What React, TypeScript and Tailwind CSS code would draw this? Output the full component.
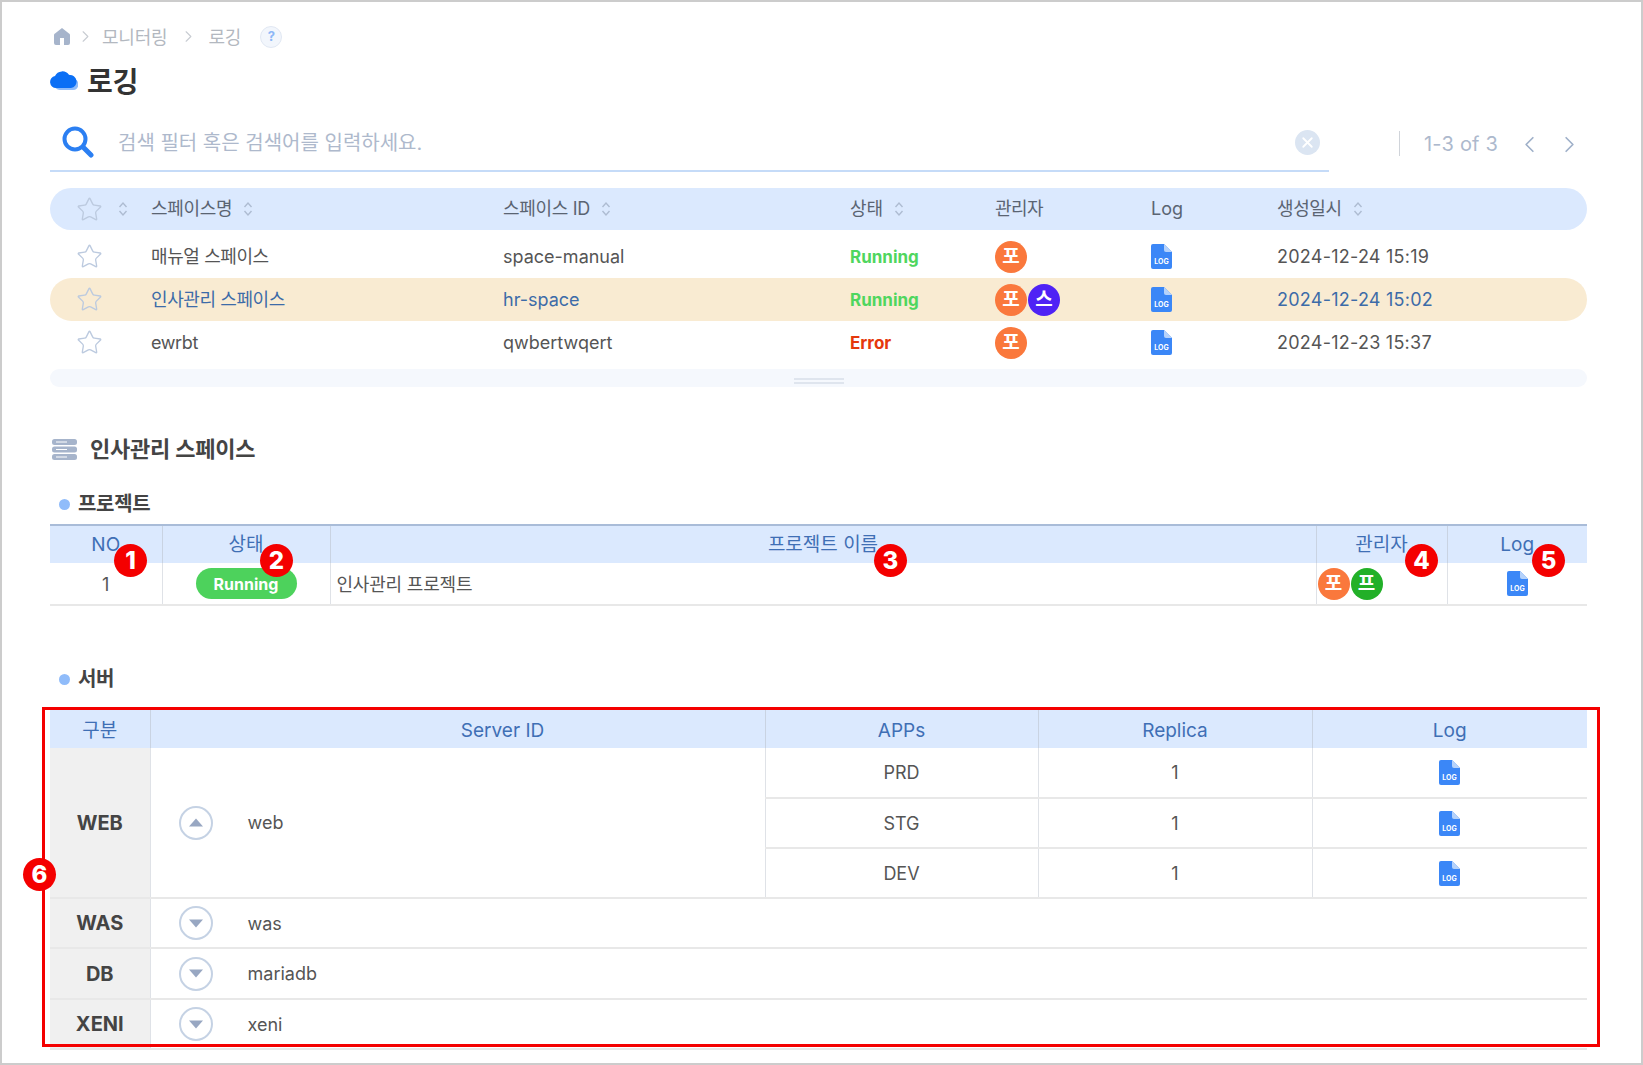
import { ChevronLeft, ChevronRight, Star, X } from 'lucide-react'

const spaces = [
  { name: '매뉴얼 스페이스', id: 'space-manual', status: 'Running', admins: ['포'], date: '2024-12-24 15:19' },
  { name: '인사관리 스페이스', id: 'hr-space', status: 'Running', admins: ['포', '스'], date: '2024-12-24 15:02', active: true },
  { name: 'ewrbt', id: 'qwbertwqert', status: 'Error', admins: ['포'], date: '2024-12-23 15:37' },
]

const servers = [
  { kind: 'WAS', id: 'was', height: 'h-[50px]' },
  { kind: 'DB', id: 'mariadb', height: 'h-[51px]' },
  { kind: 'XENI', id: 'xeni', height: 'h-[50px]' },
]

const avatarColor: Record<string, string> = {
  포: 'bg-[#fa783c]',
  스: 'bg-[#4f22f5]',
  프: 'bg-[#22b028]',
}

function SortIcon() {
  return (
    <svg width="10" height="16" viewBox="0 0 10 16" fill="none" stroke="#aebcd2" strokeWidth="1.4" className="ml-[11px] shrink-0">
      <path d="M1.5 6 5 2l3.5 4M1.5 10 5 14l3.5-4" />
    </svg>
  )
}

function LogIcon() {
  return (
    <svg width="21" height="25" viewBox="0 0 21 25" className="shrink-0">
      <path d="M2 0h11l8 8v15a2 2 0 0 1-2 2H2a2 2 0 0 1-2-2V2a2 2 0 0 1 2-2z" fill="#3b87f7" />
      <path d="M13 0l8 8h-6a2 2 0 0 1-2-2z" fill="#b5d2fb" />
      <text x="10.5" y="19.5" textAnchor="middle" fontSize="7" fontWeight="700" fill="#fff" fontFamily="Inter, sans-serif">LOG</text>
    </svg>
  )
}

function Avatar({ label }: { label: string }) {
  return (
    <span className={`flex h-[32px] w-[32px] items-center justify-center rounded-full pt-[1px] text-[19px] font-bold text-white ${avatarColor[label]}`}>
      {label}
    </span>
  )
}

function Marker({ n, className }: { n: number; className: string }) {
  return (
    <span className={`absolute flex h-[33px] w-[33px] items-center justify-center rounded-full bg-[#f40000] text-[24px] font-extrabold text-white ${className}`}>
      {n}
    </span>
  )
}

function RoundToggle({ up }: { up?: boolean }) {
  return (
    <span className="flex h-[34px] w-[34px] items-center justify-center rounded-full border-2 border-[#c5d2e4]">
      <svg width="16" height="9" viewBox="0 0 16 9" fill="#98a7c2">
        <path d={up ? 'M8 0.5 15 8.5H1z' : 'M1 0.5h14L8 8.5z'} />
      </svg>
    </span>
  )
}

function SubTitle({ children, className }: { children: string; className: string }) {
  return (
    <div className={`flex items-center pl-[9px] ${className}`}>
      <span className="mr-[8px] h-[11px] w-[11px] rounded-full bg-[#90bcfa]" />
      <span className="text-[20px] font-bold tracking-[-0.3px] text-[#444]">{children}</span>
    </div>
  )
}

const headCell = 'border-r border-[#c9d3e2] bg-[#dbe9fe] text-[19px] font-normal text-[#3f6fb5]'
const bodyCell = 'border-r border-[#dfe2e7] text-[18px] text-[#555]'

export default function App() {
  return (
    <div className="relative h-[1065px] w-[1643px] overflow-hidden border-2 border-[#cccccc] bg-white pl-[48px] pr-[54px] font-[Inter,Noto_Sans_CJK_KR,sans-serif] text-[18px] text-[#555]">
      {/* 경로 */}
      <div className="mt-[24px] flex h-[21px] items-center text-[18px] tracking-[-0.2px] text-[#b3b8c0]">
        <svg width="16" height="17" viewBox="0 0 16 17" className="ml-[4px]">
          <path d="M8 0 15 5.5a2 2 0 0 1 1 1.5v8a2 2 0 0 1-2 2H2a2 2 0 0 1-2-2V7a2 2 0 0 1 1-1.5z" fill="#a6b4cb" />
          <rect x="6" y="10" width="4" height="7" fill="#fff" />
        </svg>
        <ChevronRight size={19} strokeWidth={1.4} className="ml-[6px] text-[#c8ccd2]" />
        <span className="ml-[7px] pt-[2px]">모니터링</span>
        <ChevronRight size={19} strokeWidth={1.4} className="ml-[12px] text-[#c8ccd2]" />
        <span className="ml-[10px] pt-[2px]">로깅</span>
        <span className="ml-[19px] flex h-[22px] w-[22px] items-center justify-center rounded-full border border-[#e1e8f3] bg-[#f2f6fc] text-[13px] font-bold text-[#8db8f7]">?</span>
      </div>

      <div className="mt-[15px] flex h-[36px] items-center">
        <svg width="28" height="20" viewBox="0 0 28 20">
          <path d="M10 20a6 6 0 0 1 0-12 7 7 0 0 1 13 1 5.5 5.5 0 0 1 0 11z" fill="#8fbcfa" />
          <path d="M6 18a6 6 0 0 1-1-11.900A8 8 0 0 1 19 5a6.500 6.500 0 0 1 2 13z" fill="#0b6ff5" />
        </svg>
        <h1 className="ml-[9px] pt-[4px] text-[28px] font-bold text-[#333]">로깅</h1>
      </div>

      {/* 검색 */}
      <div className="mt-[18px] flex h-[56px] items-start">
        <div className="flex h-[56px] w-[1279px] items-center border-b-2 border-[#c5dbf8] pb-[3px] pl-[12px] pr-[9px]">
          <svg width="32" height="32" viewBox="0 0 32 32" fill="none" stroke="#2b7ff2">
            <circle cx="13" cy="13" r="10.500" strokeWidth="4" />
            <path d="M22 22l7 7" strokeWidth="5" strokeLinecap="round" />
          </svg>
          <span className="ml-[24px] flex-1 pt-[3px] text-[20px] text-[#aeb9cc]">검색 필터 혹은 검색어를 입력하세요.</span>
          <span className="mt-[1px] flex h-[25px] w-[25px] items-center justify-center rounded-full bg-[#dbe5f2]">
            <X size={17} strokeWidth={2.600} className="text-white" />
          </span>
        </div>
        <div className="ml-[70px] mt-[15px] h-[25px] w-px bg-[#d0d4da]" />
        <span className="ml-[24px] mt-[13px] w-[76px] text-[20px] tracking-[0.2px] text-[#adb9cd]">1-3 of 3</span>
        <ChevronLeft size={27} strokeWidth={1.500} className="ml-[16px] mt-[15px] text-[#9fb0c9]" />
        <ChevronRight size={27} strokeWidth={1.500} className="ml-[13px] mt-[15px] text-[#9fb0c9]" />
      </div>

      {/* 스페이스 목록 */}
      <div className="mt-[16px] grid h-[42px] w-[1537px] grid-cols-[101px_352px_347px_145px_156px_126px_1fr] items-center rounded-full bg-[#dbe9fe] text-[18px] text-[#5a6472]">
        <div className="flex items-center pl-[26px]">
          <Star size={27} strokeWidth={1.200} className="text-[#bccadf]" />
          <span className="ml-[4px]"><SortIcon /></span>
        </div>
        <div className="flex items-center pb-[1px] tracking-[-0.3px]">스페이스명<SortIcon /></div>
        <div className="flex items-center pb-[1px] tracking-[-0.3px]">스페이스 ID<SortIcon /></div>
        <div className="flex items-center pb-[1px]">상태<SortIcon /></div>
        <div className="pb-[1px] tracking-[-0.6px]">관리자</div>
        <div className="pb-[1px]">Log</div>
        <div className="flex items-center pb-[1px] tracking-[-0.4px]">생성일시<SortIcon /></div>
      </div>

      <div className="mt-[5px] flex w-[1537px] flex-col">
        {spaces.map((s) => (
          <div
            key={s.id}
            className={`grid h-[43px] grid-cols-[101px_352px_347px_145px_156px_126px_1fr] items-center rounded-full ${s.active ? 'bg-[#f9ebd2] text-[#3d6ba8]' : 'text-[#555]'}`}
          >
            <div className="pl-[26px]">
              <Star size={27} strokeWidth={1.200} className="text-[#bccadf]" />
            </div>
            <div className="tracking-[-0.4px]">{s.name}</div>
            <div>{s.id}</div>
            <div className={`pt-[3px] text-[17px] font-bold ${s.status === 'Error' ? 'text-[#e5380c]' : 'text-[#4fd65e]'}`}>{s.status}</div>
            <div className="flex gap-px">
              {s.admins.map((a) => (
                <Avatar key={a} label={a} />
              ))}
            </div>
            <div><LogIcon /></div>
            <div className="tracking-[0.25px]">{s.date}</div>
          </div>
        ))}
      </div>
      <div className="mt-[5px] flex h-[18px] w-[1537px] flex-col items-center justify-center gap-[2px] rounded-full bg-[#f5f8fd] pt-[6px]">
        <span className="h-[2px] w-[50px] bg-[#dfe5ee]" />
        <span className="h-[2px] w-[50px] bg-[#dfe5ee]" />
      </div>

      {/* 상세 */}
      <div className="mt-[46px] flex h-[32px] items-center pl-[2px]">
        <svg width="25" height="21" viewBox="0 0 25 21">
          <rect y="0" width="25" height="6" rx="2.500" fill="#a6b4cb" />
          <rect y="7.500" width="25" height="6" rx="2.500" fill="#a6b4cb" />
          <rect y="15" width="25" height="6" rx="2.500" fill="#a6b4cb" />
          <path d="M4 3h11M4 10.500h11M4 18h11" stroke="#fff" strokeWidth="1" />
        </svg>
        <h2 className="ml-[13px] text-[22px] font-bold tracking-[-0.2px] text-[#444]">인사관리 스페이스</h2>
      </div>

      <SubTitle className="mt-[23px] h-[32px]">프로젝트</SubTitle>

      <table className="mt-[4px] w-[1537px] table-fixed border-collapse border-t-2 border-[#a9bcd8] text-center">
        <colgroup>
          <col className="w-[112px]" />
          <col className="w-[168px]" />
          <col className="w-[986px]" />
          <col className="w-[131px]" />
          <col className="w-[140px]" />
        </colgroup>
        <thead>
          <tr className="h-[38px]">
            <th className={`${headCell} pt-[2px]`}>NO</th>
            <th className={`${headCell} pt-[2px]`}>상태</th>
            <th className={`${headCell} pt-[2px]`}>프로젝트 이름</th>
            <th className={`${headCell} pt-[2px]`}>관리자</th>
            <th className={`${headCell} border-r-0 pt-[2px]`}>Log</th>
          </tr>
        </thead>
        <tbody>
          <tr className="h-[42px] border-b-2 border-[#e8e8e8]">
            <td className={`${bodyCell} pt-[2px]`}>1</td>
            <td className={bodyCell}>
              <span className="mx-auto flex h-[31px] w-[101px] items-center justify-center rounded-full bg-[#4dd25c] text-[16px] font-bold text-white">Running</span>
            </td>
            <td className={`${bodyCell} pl-[6px] pt-[2px] text-left tracking-[-0.2px]`}>인사관리 프로젝트</td>
            <td className={bodyCell}>
              <div className="flex gap-px pl-[1px]">
                <Avatar label="포" />
                <Avatar label="프" />
              </div>
            </td>
            <td className={`${bodyCell} border-r-0`}>
              <div className="flex justify-center"><LogIcon /></div>
            </td>
          </tr>
        </tbody>
      </table>

      <SubTitle className="mt-[57px] h-[32px]">서버</SubTitle>

      <table className="mt-[13px] w-[1537px] table-fixed border-collapse text-center">
        <colgroup>
          <col className="w-[100px]" />
          <col className="w-[615px]" />
          <col className="w-[273px]" />
          <col className="w-[274px]" />
          <col className="w-[275px]" />
        </colgroup>
        <thead>
          <tr className="h-[40px]">
            <th className={`${headCell} pt-[6px]`}>구분</th>
            <th className={`${headCell} pl-[90px] pt-[6px]`}>Server ID</th>
            <th className={`${headCell} pt-[6px]`}>APPs</th>
            <th className={`${headCell} pt-[6px]`}>Replica</th>
            <th className={`${headCell} border-r-0 pt-[6px]`}>Log</th>
          </tr>
        </thead>
        <tbody>
          {['PRD', 'STG', 'DEV'].map((app, i) => (
            <tr key={app} className="h-[50px] border-b-2 border-[#e8e8e8]">
              {i === 0 && (
                <>
                  <td rowSpan={3} className="border-r border-[#dfe2e7] bg-[#f0f0f0] text-[20px] font-bold text-[#444]">WEB</td>
                  <td rowSpan={3} className={bodyCell}>
                    <div className="flex items-center pl-[28px]">
                      <RoundToggle up />
                      <span className="ml-[35px]">web</span>
                    </div>
                  </td>
                </>
              )}
              <td className={bodyCell}>{app}</td>
              <td className={bodyCell}>1</td>
              <td className={`${bodyCell} border-r-0`}>
                <div className="flex justify-center"><LogIcon /></div>
              </td>
            </tr>
          ))}
          {servers.map((s) => (
            <tr key={s.kind} className={`${s.height} border-b-2 border-[#e8e8e8]`}>
              <td className="border-r border-[#dfe2e7] bg-[#f0f0f0] text-[20px] font-bold text-[#444]">{s.kind}</td>
              <td colSpan={4} className="text-[18px] text-[#555]">
                <div className="flex items-center pl-[28px]">
                  <RoundToggle />
                  <span className="ml-[35px]">{s.id}</span>
                </div>
              </td>
            </tr>
          ))}
        </tbody>
      </table>

      {/* 안내 표시 */}
      <div className="absolute left-[40px] top-[705px] h-[340px] w-[1558px] border-[3px] border-[#f40000]" />
      <Marker n={1} className="left-[112px] top-[542px]" />
      <Marker n={2} className="left-[258px] top-[542px]" />
      <Marker n={3} className="left-[872px] top-[542px]" />
      <Marker n={4} className="left-[1403px] top-[542px]" />
      <Marker n={5} className="left-[1530px] top-[542px]" />
      <Marker n={6} className="left-[21px] top-[856px]" />
    </div>
  )
}
